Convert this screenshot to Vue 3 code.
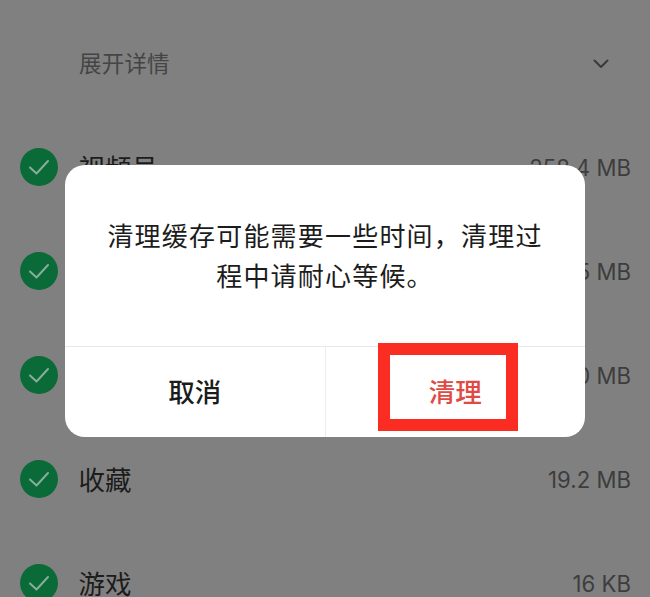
<script setup>
const rows = [
  { name: '视频号', size: '258.4 MB' },
  { name: '', size: '6.5 MB' },
  { name: '', size: '1.0 MB' },
  { name: '收藏', size: '19.2 MB' },
  { name: '游戏', size: '16 KB' },
]
</script>

<template>
  <div class="page">
    <div class="header">
      <span class="header-text">展开详情</span>
      <svg class="chevron" width="16" height="10" viewBox="0 0 16 10">
        <path d="M1.5 1.5 L8 8 L14.5 1.5" fill="none" stroke="#3a3a3a" stroke-width="2" stroke-linecap="round" stroke-linejoin="round" />
      </svg>
    </div>
    <div v-for="row in rows" :key="row.size" class="row">
      <svg class="check" width="38" height="38" viewBox="0 0 38 38">
        <circle cx="19" cy="19" r="19" fill="#0a6a38" />
        <path d="M10 19.5 L16.5 25.5 L28 13" fill="none" stroke="#88ad98" stroke-width="2" stroke-linecap="round" stroke-linejoin="round" />
      </svg>
      <span class="name">{{ row.name }}</span>
      <span class="size">{{ row.size }}</span>
    </div>

    <div class="dialog">
      <p class="message">清理缓存可能需要一些时间，清理过程中请耐心等候。</p>
      <div class="actions">
        <div class="action cancel">取消</div>
        <div class="action confirm">清理</div>
      </div>
      <div class="highlight"></div>
    </div>
  </div>
</template>

<style scoped>
.page {
  position: relative;
  width: 650px;
  height: 597px;
  overflow: hidden;
  background: #808080;
  font-family: "Noto Sans CJK SC", "Noto Sans", sans-serif;
}
.header {
  height: 104px;
  padding: 11px 41px 0 79px;
  display: flex;
  align-items: center;
  justify-content: space-between;
}
.header-text {
  padding-bottom: 3px;
  font-size: 22.5px;
  letter-spacing: 0.2px;
  color: #454545;
}
.chevron {
  display: block;
  margin-top: 2px;
}
.row {
  height: 104px;
  padding: 0 19px 0 20px;
  display: flex;
  align-items: center;
}
.check {
  flex: none;
  display: block;
}
.name {
  margin-left: 20.5px;
  padding-bottom: 2px;
  flex: 1;
  font-size: 26.5px;
  color: #1c1c1c;
}
.size {
  font-family: Inter, "Noto Sans", sans-serif;
  font-size: 22.2px;
  color: #3d3d3d;
}
.dialog {
  position: absolute;
  left: 65px;
  top: 165px;
  width: 520px;
  height: 272px;
  background: #fff;
  border-radius: 20px;
  display: flex;
  flex-direction: column;
}
.message {
  margin: 0;
  height: 181px;
  box-sizing: border-box;
  padding: 50px 40px 0;
  font-size: 26px;
  line-height: 40px;
  letter-spacing: 1.2px;
  text-align: center;
  color: #1c1c1c;
}
.actions {
  flex: 1;
  display: flex;
  border-top: 1px solid #e8e8e8;
}
.action {
  flex: 1;
  display: flex;
  align-items: center;
  justify-content: center;
  padding-bottom: 3px;
  font-size: 26.5px;
  font-weight: 500;
}
.cancel {
  color: #1c1c1c;
  border-right: 1px solid #ececec;
}
.confirm {
  color: #e04a44;
}
.highlight {
  position: absolute;
  left: 313px;
  top: 178px;
  width: 140px;
  height: 88px;
  box-sizing: border-box;
  border: 12px solid #fb2d22;
}
</style>
